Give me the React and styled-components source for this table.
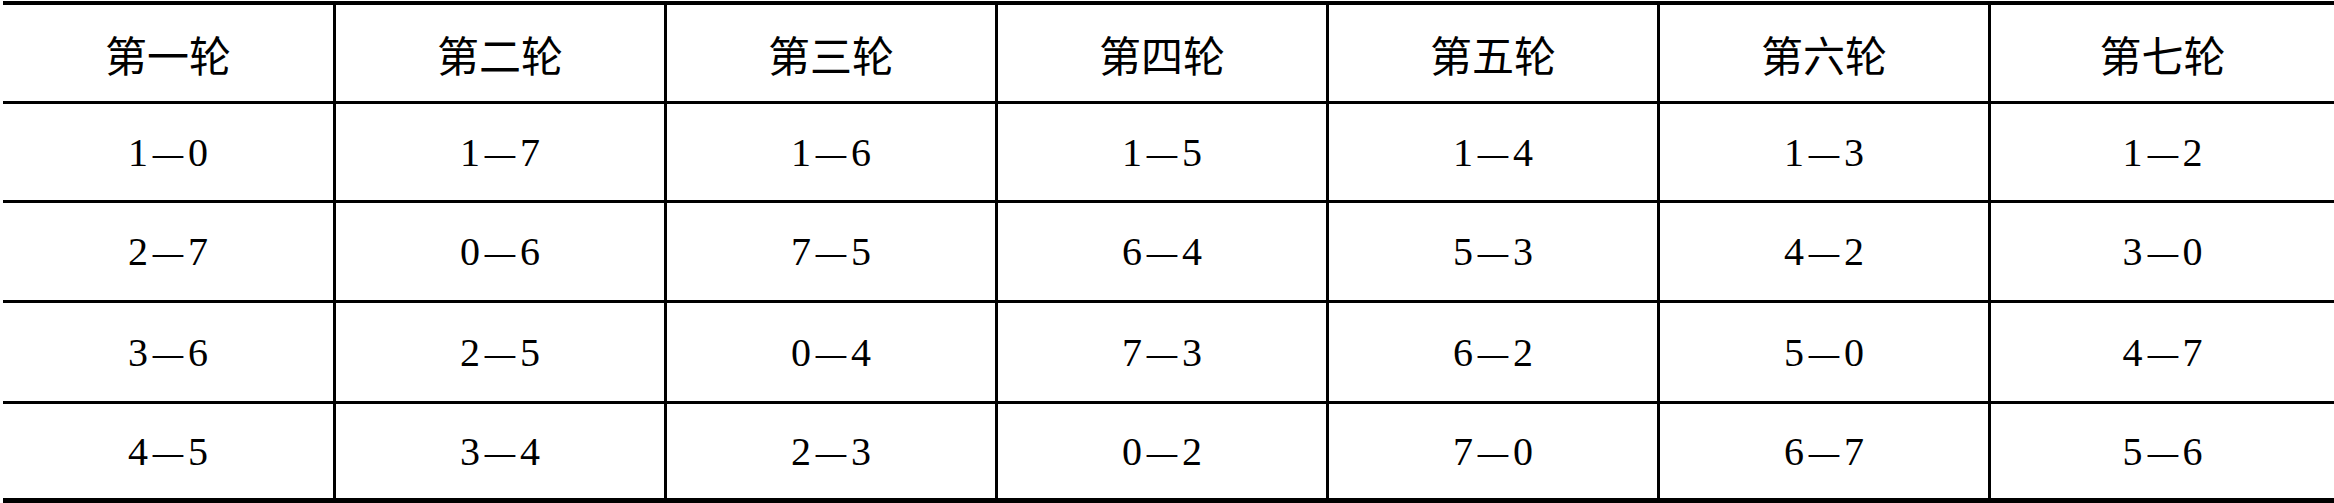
import React from 'react'
import styled, { createGlobalStyle } from 'styled-components'

const GlobalStyle = createGlobalStyle`
    html, body {
        margin: 0;
        padding: 0;
        background: #ffffff;
    }
`;

const rounds = ['第一轮', '第二轮', '第三轮', '第四轮', '第五轮', '第六轮', '第七轮'];

const rows = [
    ['1—0', '1—7', '1—6', '1—5', '1—4', '1—3', '1—2'],
    ['2—7', '0—6', '7—5', '6—4', '5—3', '4—2', '3—0'],
    ['3—6', '2—5', '0—4', '7—3', '6—2', '5—0', '4—7'],
    ['4—5', '3—4', '2—3', '0—2', '7—0', '6—7', '5—6'],
];

const rowHeights = [99, 100, 101, 99];

const Page = styled.div`
    padding: 1px 0 0 3px;
    width: 2331px;
`;

const Grid = styled.div`
    display: grid;
    grid-template-columns: 333px 331px 331px 331px 331px 331px 343px;
    width: 2331px;
    color: #000;
`;

const Cell = styled.div`
    box-sizing: border-box;
    height: ${(props) => props.$h}px;
    display: flex;
    justify-content: center;
    align-items: center;
    border-right: ${(props) => (props.$last ? 'none' : '3px solid #000')};
    border-top: ${(props) => (props.$head ? '4px solid #000' : 'none')};
    border-bottom: ${(props) => (props.$bottom ? '5px solid #000' : '3px solid #000')};
    font-family: "Liberation Serif", "Noto Sans CJK SC", serif;
    font-size: ${(props) => (props.$head ? '42px' : '40px')};
    white-space: nowrap;
`;

const Dash = styled.span`
    display: inline-block;
    transform: scaleX(0.76);
`;

const Pair = ({ value }) => {
    const [a, b] = value.split('—');
    return (
        <>
            {a}<Dash>—</Dash>{b}
        </>
    );
};

const App = () => {
    return (
        <Page>
            <GlobalStyle />
            <Grid>
                {rounds.map((r, i) => (
                    <Cell key={r} $head $h={103} $last={i === 6}>{r}</Cell>
                ))}
                {rows.map((row, ri) =>
                    row.map((v, ci) => (
                        <Cell
                            key={ri + '-' + ci}
                            $h={rowHeights[ri]}
                            $last={ci === 6}
                            $bottom={ri === rows.length - 1}
                        >
                            <Pair value={v} />
                        </Cell>
                    ))
                )}
            </Grid>
        </Page>
    )
}

export default App
